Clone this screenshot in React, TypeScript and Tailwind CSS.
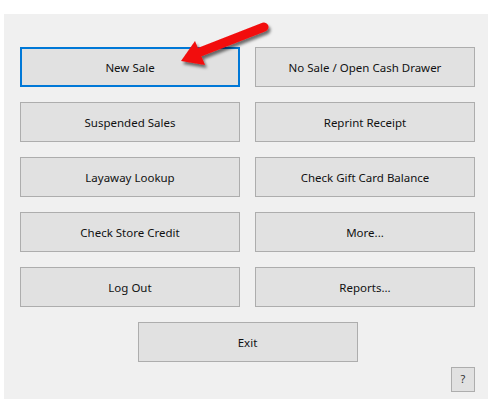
import React from "react"

const left = ["New Sale", "Suspended Sales", "Layaway Lookup", "Check Store Credit", "Log Out"]
const right = ["No Sale / Open Cash Drawer", "Reprint Receipt", "Check Gift Card Balance", "More...", "Reports..."]

function Btn({ label, focused }: { label: string; focused?: boolean }) {
  return (
    <button
      className={`w-[220px] h-[40px] bg-[#e1e1e1] text-[11.5px] text-[#111] pt-[2px] flex items-center justify-center ${
        focused ? "border-2 border-[#0078d7]" : "border border-[#adadad]"
      }`}
    >
      {label}
    </button>
  )
}

export default function App() {
  const rows = left.map((l, i) => [l, right[i]])

  return (
    <div
      className="relative w-[489px] h-[399px] bg-white pt-[14px] pl-[4px] pr-[1px] overflow-hidden"
      style={{ fontFamily: '"Noto Sans", "Open Sans", sans-serif' }}
    >
      <div className="h-[385px] bg-[#f0f0f0] pl-[16px] pt-[33px] pr-[13px] flex flex-col">
        <div className="grid grid-cols-[220px_220px] gap-x-[15px] gap-y-[15px]">
          {rows.map(([l, r], i) => (
            <React.Fragment key={i}>
              <Btn label={l} focused={i === 0} />
              <Btn label={r} />
            </React.Fragment>
          ))}
        </div>
        <div className="flex justify-center w-[455px] mt-[15px]">
          <Btn label="Exit" />
        </div>
        <div className="flex justify-end mt-[5px]">
          <button className="w-[24px] h-[25px] bg-[#e1e1e1] border border-[#adadad] text-[11px] text-[#333] flex items-center justify-center">
            ?
          </button>
        </div>
      </div>

      {/* red callout arrow */}
      <svg className="absolute left-0 top-0 pointer-events-none" width="489" height="120" viewBox="0 0 489 120">
        <defs>
          <filter id="sh" x="-20%" y="-40%" width="140%" height="180%">
            <feDropShadow dx="2" dy="3" stdDeviation="1.5" floodColor="#000" floodOpacity="0.55" />
          </filter>
        </defs>
        <g filter="url(#sh)">
          <line x1="264" y1="27" x2="200" y2="52" stroke="#f20d0d" strokeWidth="9" strokeLinecap="round" />
          <polygon points="181,61 195,41 205,65" fill="#f20d0d" />
        </g>
      </svg>
    </div>
  )
}
